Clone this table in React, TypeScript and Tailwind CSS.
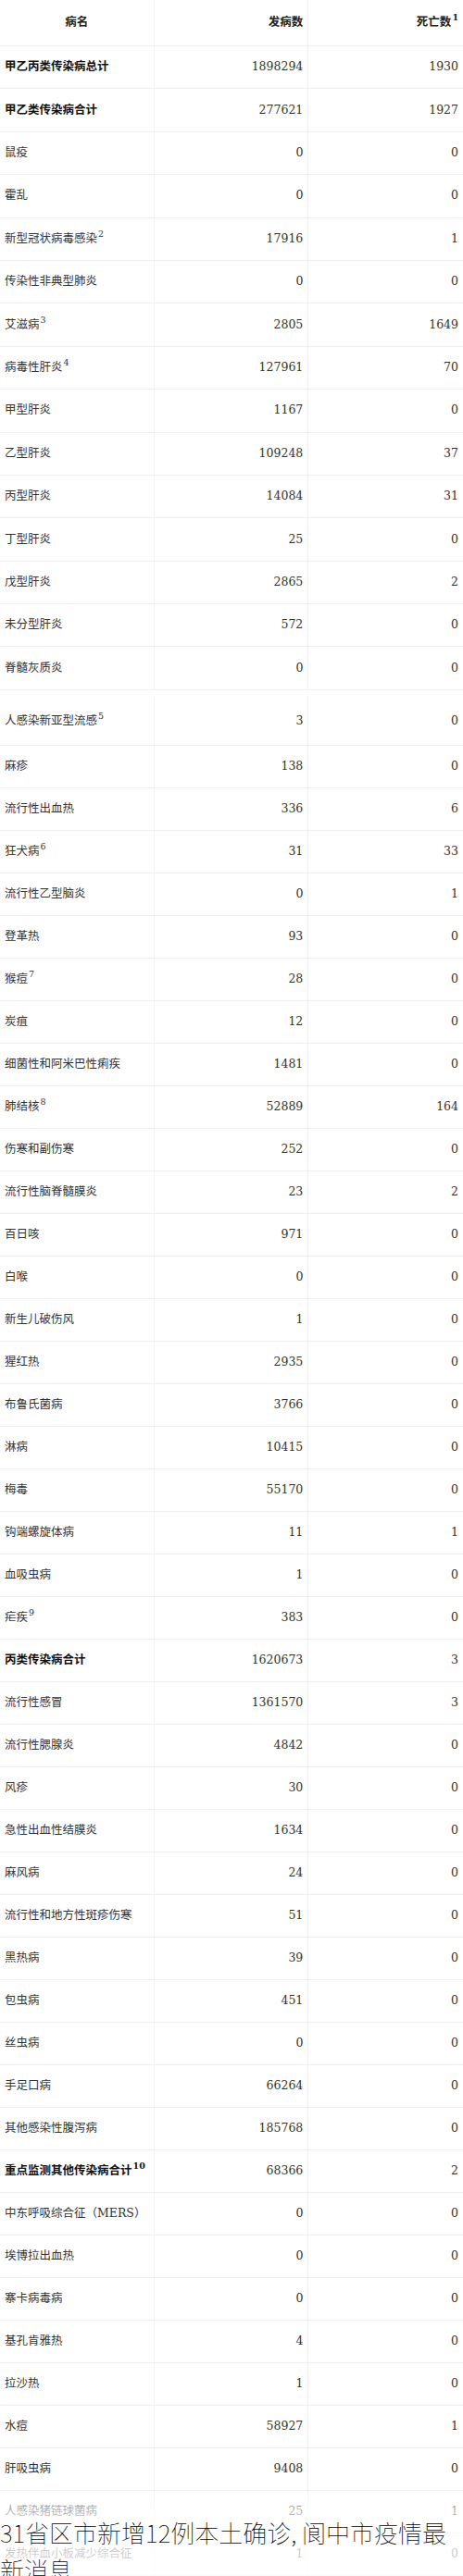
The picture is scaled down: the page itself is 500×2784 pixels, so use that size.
import type { ReactNode } from "react";

type Row = {
  name: string;
  cases: string;
  deaths: string;
  sup?: string;
  bold?: boolean;
  tall?: boolean;
};

const rows: Row[] = [
  { name: "甲乙丙类传染病总计", cases: "1898294", deaths: "1930", bold: true },
  { name: "甲乙类传染病合计", cases: "277621", deaths: "1927", bold: true },
  { name: "鼠疫", cases: "0", deaths: "0" },
  { name: "霍乱", cases: "0", deaths: "0" },
  { name: "新型冠状病毒感染", cases: "17916", deaths: "1", sup: "2" },
  { name: "传染性非典型肺炎", cases: "0", deaths: "0" },
  { name: "艾滋病", cases: "2805", deaths: "1649", sup: "3" },
  { name: "病毒性肝炎", cases: "127961", deaths: "70", sup: "4" },
  { name: "甲型肝炎", cases: "1167", deaths: "0" },
  { name: "乙型肝炎", cases: "109248", deaths: "37" },
  { name: "丙型肝炎", cases: "14084", deaths: "31" },
  { name: "丁型肝炎", cases: "25", deaths: "0" },
  { name: "戊型肝炎", cases: "2865", deaths: "2" },
  { name: "未分型肝炎", cases: "572", deaths: "0" },
  { name: "脊髓灰质炎", cases: "0", deaths: "0" },
  { name: "人感染新亚型流感", cases: "3", deaths: "0", sup: "5", tall: true },
  { name: "麻疹", cases: "138", deaths: "0" },
  { name: "流行性出血热", cases: "336", deaths: "6" },
  { name: "狂犬病", cases: "31", deaths: "33", sup: "6" },
  { name: "流行性乙型脑炎", cases: "0", deaths: "1" },
  { name: "登革热", cases: "93", deaths: "0" },
  { name: "猴痘", cases: "28", deaths: "0", sup: "7" },
  { name: "炭疽", cases: "12", deaths: "0" },
  { name: "细菌性和阿米巴性痢疾", cases: "1481", deaths: "0" },
  { name: "肺结核", cases: "52889", deaths: "164", sup: "8" },
  { name: "伤寒和副伤寒", cases: "252", deaths: "0" },
  { name: "流行性脑脊髓膜炎", cases: "23", deaths: "2" },
  { name: "百日咳", cases: "971", deaths: "0" },
  { name: "白喉", cases: "0", deaths: "0" },
  { name: "新生儿破伤风", cases: "1", deaths: "0" },
  { name: "猩红热", cases: "2935", deaths: "0" },
  { name: "布鲁氏菌病", cases: "3766", deaths: "0" },
  { name: "淋病", cases: "10415", deaths: "0" },
  { name: "梅毒", cases: "55170", deaths: "0" },
  { name: "钩端螺旋体病", cases: "11", deaths: "1" },
  { name: "血吸虫病", cases: "1", deaths: "0" },
  { name: "疟疾", cases: "383", deaths: "0", sup: "9" },
  { name: "丙类传染病合计", cases: "1620673", deaths: "3", bold: true },
  { name: "流行性感冒", cases: "1361570", deaths: "3" },
  { name: "流行性腮腺炎", cases: "4842", deaths: "0" },
  { name: "风疹", cases: "30", deaths: "0" },
  { name: "急性出血性结膜炎", cases: "1634", deaths: "0" },
  { name: "麻风病", cases: "24", deaths: "0" },
  { name: "流行性和地方性斑疹伤寒", cases: "51", deaths: "0" },
  { name: "黑热病", cases: "39", deaths: "0" },
  { name: "包虫病", cases: "451", deaths: "0" },
  { name: "丝虫病", cases: "0", deaths: "0" },
  { name: "手足口病", cases: "66264", deaths: "0" },
  { name: "其他感染性腹泻病", cases: "185768", deaths: "0" },
  { name: "重点监测其他传染病合计", cases: "68366", deaths: "2", sup: "10", bold: true },
  { name: "中东呼吸综合征（MERS）", cases: "0", deaths: "0" },
  { name: "埃博拉出血热", cases: "0", deaths: "0" },
  { name: "寨卡病毒病", cases: "0", deaths: "0" },
  { name: "基孔肯雅热", cases: "4", deaths: "0" },
  { name: "拉沙热", cases: "1", deaths: "0" },
  { name: "水痘", cases: "58927", deaths: "1" },
  { name: "肝吸虫病", cases: "9408", deaths: "0" },
  { name: "人感染猪链球菌病", cases: "25", deaths: "1" },
  { name: "发热伴血小板减少综合征", cases: "1", deaths: "0" },
];

function Sup({ children }: { children: ReactNode }) {
  return <span className="relative -top-[6px] ml-px text-[9.5px] leading-none">{children}</span>;
}

function Cell({ children, align }: { children: ReactNode; align: "left" | "center" | "right" }) {
  const a = align === "left" ? "justify-start" : align === "center" ? "justify-center" : "justify-end";
  return <div className={`flex items-center px-[5px] border-r border-[#f2f2f2] last:border-r-0 ${a}`}>{children}</div>;
}

export default function App() {
  return (
    <div className="relative h-[2784px] w-[500px] overflow-hidden bg-white text-[#333] font-['DejaVu_Serif','Noto_Sans_CJK_SC',serif] text-[12.5px]">
      <div className="grid h-[50px] grid-cols-3 border-b border-[#eeeeee] font-bold text-[#222]">
        <Cell align="center">病名</Cell>
        <Cell align="right">发病数</Cell>
        <Cell align="right">
          死亡数<Sup>1</Sup>
        </Cell>
      </div>

      {rows.map((r, i) => (
        <div
          key={r.name}
          className={`grid grid-cols-3 border-b border-[#eeeeee] ${
            r.tall ? "h-[60px] pt-[8px]" : i < 15 ? "h-[46.4px]" : "h-[46px]"
          }`}
        >
          <Cell align="left">
            <span className={r.bold ? "font-bold text-[#111]" : ""}>
              {r.name}
              {r.sup && <Sup>{r.sup}</Sup>}
            </span>
          </Cell>
          <Cell align="right">{r.cases}</Cell>
          <Cell align="right">{r.deaths}</Cell>
        </div>
      ))}

      {/* bottom fade */}
      <div className="pointer-events-none absolute inset-x-0 bottom-0 h-[100px] bg-[linear-gradient(to_bottom,rgba(255,255,255,0),rgba(255,255,255,0.65)_30%,rgba(255,255,255,0.8))]" />

      {/* headline over the fade */}
      <div className="absolute left-0 right-0 top-[2717px] font-['Noto_Sans_CJK_SC',sans-serif] text-[26px] font-thin leading-[40px] text-black">
        31省区市新增12例本土确诊, 阆中市疫情最新消息
      </div>
    </div>
  );
}
